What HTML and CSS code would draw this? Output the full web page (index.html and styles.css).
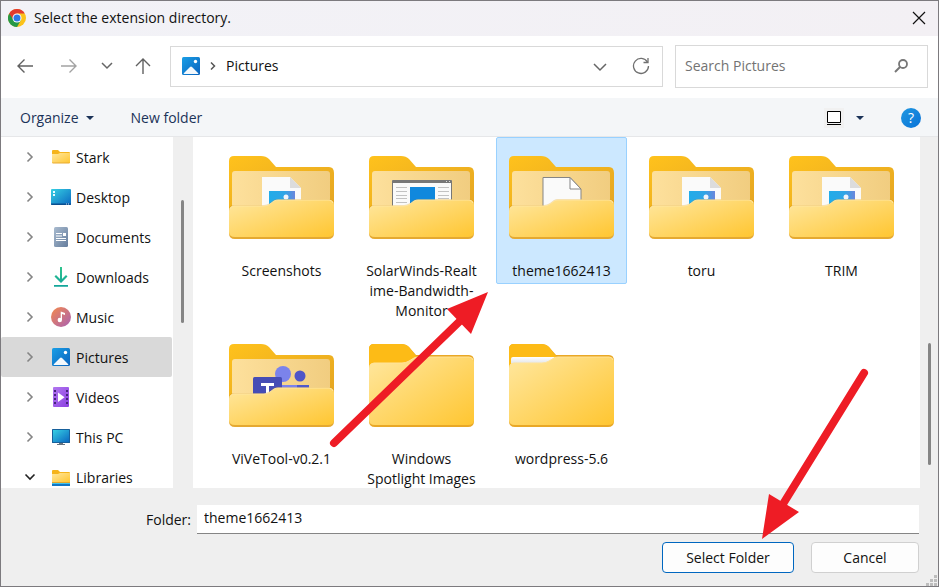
FILE: index.html
```html
<!DOCTYPE html>
<html lang="en">
<head>
<meta charset="utf-8">
<title>Select the extension directory.</title>
<link rel="stylesheet" href="styles.css">
</head>
<body>
<svg class="defs" aria-hidden="true">
  <defs>
    <linearGradient id="gBack" x1="0" y1="0" x2="1" y2="1"><stop offset="0" stop-color="#ffc21c"/><stop offset="1" stop-color="#e3a423"/></linearGradient>
    <linearGradient id="gInner" x1="0" y1="0" x2="1" y2="0"><stop offset="0" stop-color="#fde09c"/><stop offset="1" stop-color="#f1cd80"/></linearGradient>
    <linearGradient id="gFront" x1="0" y1="0" x2="1" y2="1"><stop offset="0" stop-color="#ffe79f"/><stop offset="1" stop-color="#ffc631"/></linearGradient>
    <linearGradient id="gBlue" x1="0" y1="0" x2="1" y2="1"><stop offset="0" stop-color="#1a9fe6"/><stop offset="1" stop-color="#0a62bd"/></linearGradient>
    <linearGradient id="gDesk" x1="0" y1="0" x2="1" y2="1"><stop offset="0" stop-color="#36d0e3"/><stop offset="1" stop-color="#0b68c1"/></linearGradient>
    <linearGradient id="gDoc" x1="0" y1="0" x2="1" y2="1"><stop offset="0" stop-color="#a9bbcf"/><stop offset="1" stop-color="#657d9d"/></linearGradient>
    <linearGradient id="gDown" x1="0" y1="0" x2="0" y2="1"><stop offset="0" stop-color="#2fc48d"/><stop offset="1" stop-color="#12a59b"/></linearGradient>
    <linearGradient id="gMusic" x1="0" y1="0" x2="1" y2="1"><stop offset="0" stop-color="#f58a4c"/><stop offset="1" stop-color="#a860b4"/></linearGradient>
    <linearGradient id="gVideo" x1="0" y1="0" x2="1" y2="1"><stop offset="0" stop-color="#b277f0"/><stop offset="1" stop-color="#8a3fe0"/></linearGradient>
    <linearGradient id="gPic" x1="0" y1="0" x2="1" y2="0"><stop offset="0" stop-color="#22ace8"/><stop offset="0.6" stop-color="#30a5e6"/><stop offset="1" stop-color="#6a86dc"/></linearGradient>
    <linearGradient id="gSheet" x1="0" y1="0" x2="0" y2="1"><stop offset="0" stop-color="#ffffff"/><stop offset="1" stop-color="#d7dade"/></linearGradient>

    <symbol id="back" viewBox="0 0 105 84">
      <path d="M0 54V5Q0 0 5 0H32Q37 0 40 3L47 11H100Q105 11 105 17V54Z" fill="url(#gBack)"/>
      <path d="M3 56V18Q3 15 6 15H98Q101 15 101 18V56Z" fill="url(#gInner)"/>
    </symbol>
    <symbol id="front" viewBox="0 0 105 84">
      <path d="M0 53Q0 49 5 49H35Q38 49 41 47L45 44Q47 43 49 43H100Q105 43 105 49V56H0Z" fill="#c78a1c" opacity="0.25"/>
      <path d="M0 56Q0 51 5 51H35Q38 51 41 49L45 46Q47 45 49 45H100Q105 45 105 50V77Q105 83 99 83H6Q0 83 0 77Z" fill="#e5a931"/>
      <path d="M0 55Q0 50 5 50H35Q38 50 41 48L45 45Q47 44 49 44H100Q105 44 105 49V76Q105 81 99 81H6Q0 81 0 76Z" fill="url(#gFront)"/>
      <path d="M1 53Q2 50 5 50H35Q38 50 41 48L45 45Q47 44 49 44H100Q103 44 104 47" fill="none" stroke="#ffe5a0" stroke-width="1"/>
    </symbol>
    <symbol id="closed" viewBox="0 0 105 84">
      <path d="M0 24V5Q0 0 5 0H32Q37 0 40 3L47 11H100Q105 11 105 17V77Q105 83 99 83H6Q0 83 0 77Z" fill="#e9a826"/>
      <path d="M0 24V5Q0 0 5 0H32Q37 0 40 3L47 12V24Z" fill="#fdbb16"/>
    </symbol>
    <symbol id="closedFront" viewBox="0 0 105 84">
      <path d="M0 24Q0 19 5 19H33Q37 19 40 17L45 14Q47 13 49 13H100Q105 13 105 18V76Q105 81 99 81H6Q0 81 0 76Z" fill="url(#gFront)"/>
      <path d="M1 22Q2 19 5 19H33Q37 19 40 17L45 14Q47 13 49 13H100Q103 13 104 16" fill="none" stroke="#ffe39a"/>
    </symbol>
    <symbol id="imageFolder" viewBox="0 0 105 84">
      <use href="#back"/>
      <path d="M33 56V21H61L72 32V56Z" fill="#fafafa"/>
      <path d="M61 21V32H72Z" fill="#dcdcdc"/>
      <rect x="40" y="35" width="26" height="20" fill="url(#gPic)"/>
      <circle cx="57" cy="41" r="2.5" fill="#f2f4fb"/>
      <use href="#front"/>
    </symbol>
    <symbol id="picture" viewBox="0 0 18 18">
      <rect width="18" height="18" rx="1.500" fill="url(#gBlue)"/>
      <path d="M1.500 16.500L8 10Q9 9 10 10L16.500 16.500Q16 17 15 17H3Q2 17 1.500 16.500Z" fill="#f3f8fc"/>
      <circle cx="13.500" cy="4.500" r="1.700" fill="#fff"/>
    </symbol>
    <symbol id="chev" viewBox="0 0 8 12"><path d="M1.500 1.500L6 6L1.500 10.500" fill="none" stroke="#858585" stroke-width="1.600"/></symbol>
    <symbol id="smallFolder" viewBox="0 0 20 20">
      <path d="M1 16V4Q1 3 2 3H7L9 5H18Q19 5 19 6V16Z" fill="#f5b41c"/>
      <path d="M1 7H7L9 6H19V15Q19 16 18 16H2Q1 16 1 15Z" fill="url(#gFront)"/>
      <path d="M1.500 16H18.500" stroke="#e7aa33"/>
    </symbol>
  </defs>
</svg>

<div class="dialog">
  <header class="titlebar">
    <svg class="i18" viewBox="0 0 18 18" aria-hidden="true">
      <circle cx="9" cy="9" r="9" fill="#fbc21a"/>
      <path d="M9 9L1.200 4.500A9 9 0 0 0 9 18L13 11Z" fill="#279847"/>
      <path d="M1.200 4.500A9 9 0 0 1 16.800 4.500H9L5.500 11Z" fill="#e33b2e"/>
      <circle cx="9" cy="9" r="4.500" fill="#fff"/><circle cx="9" cy="9" r="3.500" fill="#2f79e6"/>
    </svg>
    <h1>Select the extension directory.</h1>
    <button class="bare" aria-label="Close"><svg class="i14" viewBox="0 0 14 14"><path d="M1 1L13 13M13 1L1 13" fill="none" stroke="#111" stroke-width="1.200"/></svg></button>
  </header>

  <div class="navbar">
    <div class="history">
      <button class="bare" aria-label="Back"><svg class="i18" viewBox="0 0 18 18"><path d="M17 9H2M8.500 2.500L2 9L8.500 15.500" fill="none" stroke="#616161" stroke-width="1.400"/></svg></button>
      <button class="bare forward" aria-label="Forward"><svg class="i18" viewBox="0 0 18 18"><path d="M1 9H16M9.500 2.500L16 9L9.500 15.500" fill="none" stroke="#a2a2a2" stroke-width="1.400"/></svg></button>
      <button class="bare recent" aria-label="Recent locations"><svg class="i14" viewBox="0 0 14 14"><path d="M2 4L7 9L12 4" fill="none" stroke="#666" stroke-width="1.500"/></svg></button>
      <button class="bare" aria-label="Up"><svg class="i18" viewBox="0 0 18 18"><path d="M9 17V2M2 9L9 2L16 9" fill="none" stroke="#616161" stroke-width="1.400"/></svg></button>
    </div>
    <div class="address">
      <svg class="i18" aria-hidden="true"><use href="#picture"/></svg>
      <svg class="crumb" viewBox="0 0 6 8" aria-hidden="true"><path d="M1 0.500L4.500 4L1 7.500" fill="none" stroke="#555" stroke-width="1.500"/></svg>
      <a href="#">Pictures</a>
      <button class="bare drop" aria-label="Previous locations"><svg class="i14" viewBox="0 0 14 14"><path d="M1 5L7 11L13 5" fill="none" stroke="#666" stroke-width="1.500"/></svg></button>
      <button class="bare" aria-label="Refresh"><svg class="i18" viewBox="0 0 18 18"><path d="M15.500 5.200A7.500 7.500 0 1 0 16.500 9" fill="none" stroke="#707070" stroke-width="1.300"/><path d="M16 1V5.500H11.500" fill="none" stroke="#707070" stroke-width="1.300"/></svg></button>
    </div>
    <label class="search">
      <input type="text" placeholder="Search Pictures" aria-label="Search Pictures">
      <svg class="i14" viewBox="0 0 14 14" aria-hidden="true"><circle cx="9" cy="5" r="4" fill="none" stroke="#777" stroke-width="1.800"/><path d="M6 8L1 13" stroke="#777" stroke-width="2"/></svg>
    </label>
  </div>

  <div class="toolbar">
    <button class="bare">Organize <svg class="caret" viewBox="0 0 8 4" aria-hidden="true"><path d="M0 0H8L4 4Z" fill="#1b3358"/></svg></button>
    <button class="bare">New folder</button>
    <div class="tools">
      <button class="bare view" aria-label="Change your view"><svg class="i14" viewBox="0 0 14 14"><path d="M0.500 0.500H13.500V11.500H0.500Z" fill="#fff" stroke="#000"/><path d="M0 13.500H14" stroke="#000"/></svg></button>
      <button class="bare" aria-label="More view options"><svg class="caret" viewBox="0 0 8 4"><path d="M0 0H8L4 4Z" fill="#1b3358"/></svg></button>
      <button class="help" aria-label="Help">?</button>
    </div>
  </div>

  <main class="middle">
    <nav class="sidebar" aria-label="Folders">
      <ul>
        <li><svg class="chev" aria-hidden="true"><use href="#chev"/></svg><svg class="i20" aria-hidden="true"><use href="#smallFolder"/></svg><a href="#">Stark</a></li>
        <li><svg class="chev" aria-hidden="true"><use href="#chev"/></svg><svg class="i20" viewBox="0 0 20 20" aria-hidden="true"><rect y="2" width="20" height="16" rx="1" fill="url(#gDesk)"/><path d="M0 16.500H20V17Q20 18 19 18H1Q0 18 0 17Z" fill="#0a4e8f"/><path d="M2 4H4V6H2ZM2 7H4V9H2Z" fill="#e8fbff"/><path d="M15 17H16M17 17H18" stroke="#cde"/></svg><a href="#">Desktop</a></li>
        <li><svg class="chev" aria-hidden="true"><use href="#chev"/></svg><svg class="i20" viewBox="0 0 20 20" aria-hidden="true"><rect x="3" width="14" height="20" rx="1.500" fill="url(#gDoc)"/><path d="M5 6.500H11M5 9H11M5 11.500H15M5 13.500H15" stroke="#fff" stroke-width="1.200"/><rect x="12" y="6" width="3" height="3" fill="#fff"/></svg><a href="#">Documents</a></li>
        <li><svg class="chev" aria-hidden="true"><use href="#chev"/></svg><svg class="i20" viewBox="0 0 20 20" aria-hidden="true"><path d="M9 0H11V12L15 8L16.500 9.500L10 16L3.500 9.500L5 8L9 12ZM3 18H17V19.800H3Z" fill="url(#gDown)"/></svg><a href="#">Downloads</a></li>
        <li><svg class="chev" aria-hidden="true"><use href="#chev"/></svg><svg class="i20" viewBox="0 0 20 20" aria-hidden="true"><circle cx="10" cy="10" r="10" fill="url(#gMusic)"/><circle cx="8.800" cy="13" r="2.200" fill="#fff"/><path d="M9.700 13V4.500L14 6V8L11 7V13Z" fill="#fff"/></svg><a href="#">Music</a></li>
        <li class="current"><svg class="chev" aria-hidden="true"><use href="#chev"/></svg><svg class="i20" viewBox="-1 -1 20 20" aria-hidden="true"><use href="#picture" width="18" height="18"/></svg><a href="#" aria-current="page">Pictures</a></li>
        <li><svg class="chev" aria-hidden="true"><use href="#chev"/></svg><svg class="i20" viewBox="0 0 20 20" aria-hidden="true"><rect x="2" width="16" height="20" rx="1" fill="url(#gVideo)"/><path d="M4 3V18M16 3V18" stroke="#46237c" stroke-width="2" stroke-dasharray="2 2"/><path d="M7 5.500V15L13.500 10.200Z" fill="#fff"/></svg><a href="#">Videos</a></li>
        <li><svg class="chev" aria-hidden="true"><use href="#chev"/></svg><svg class="i20" viewBox="0 0 20 20" aria-hidden="true"><rect x="1" y="2" width="18" height="14" rx="0.500" fill="#17609b"/><rect x="2" y="3" width="16" height="12" fill="url(#gDesk)"/><path d="M8 16H12V17H14V18H6V17H8Z" fill="#68737e"/></svg><a href="#">This PC</a></li>
        <li><svg class="chev open" viewBox="0 0 12 8" aria-hidden="true"><path d="M1.500 1.500L6 6L10.500 1.500" fill="none" stroke="#222" stroke-width="1.600"/></svg><svg class="i20" viewBox="0 0 20 20" aria-hidden="true"><path d="M1 15V4Q1 3 2 3H7L9 5H18Q19 5 19 6V15Z" fill="#f5b41c"/><path d="M1 7H7L9 6H19V15H1Z" fill="url(#gFront)"/><path d="M1 15.500H19" stroke="#e2a72c"/><path d="M1 16.500H19" stroke="#3fc3ee"/><path d="M1 18H19" stroke="#1276c4" stroke-width="2"/></svg><a href="#">Libraries</a></li>
      </ul>
    </nav>
    <div class="track side"><div class="thumb"></div></div>
    <ul class="files">
      <li><button class="file"><svg class="folder" viewBox="0 0 105 84" aria-hidden="true"><use href="#imageFolder"/></svg><span>Screenshots</span></button></li>
      <li><button class="file"><svg class="folder" viewBox="0 0 105 84" aria-hidden="true"><use href="#back"/><rect x="23" y="24" width="60" height="32" rx="1" fill="#777"/><rect x="24" y="27" width="58" height="30" fill="#fafafa"/><path d="M77 25.500H78M80 25.500H81" stroke="#ddd"/><rect x="41" y="31" width="25" height="20" fill="#1088dd"/><path d="M27 31.500H38M27 35.500H38M27 39.500H38M27 42.500H38M27 46.500H38M69 31.500H80M69 35.500H80M69 39.500H80M69 42.500H80M69 46.500H80" stroke="#c2c2c2"/><use href="#front"/></svg><span>SolarWinds-Realt<wbr>ime-Bandwidth-<wbr>Monitor</span></button></li>
      <li><button class="file selected" aria-pressed="true"><svg class="folder" viewBox="0 0 105 84" aria-hidden="true"><use href="#back"/><path d="M34 56V21.500H61L72 33V56Z" fill="#fafafa" stroke="#858585"/><path d="M61 21.500V33H72Z" fill="#fff" stroke="#858585"/><use href="#front"/></svg><span>theme1662413</span></button></li>
      <li><button class="file"><svg class="folder" viewBox="0 0 105 84" aria-hidden="true"><use href="#imageFolder"/></svg><span>toru</span></button></li>
      <li><button class="file"><svg class="folder" viewBox="0 0 105 84" aria-hidden="true"><use href="#imageFolder"/></svg><span>TRIM</span></button></li>
      <li><button class="file"><svg class="folder" viewBox="0 0 105 84" aria-hidden="true"><use href="#back"/><circle cx="71" cy="32" r="5.500" fill="#4f55c8"/><path d="M50 41H80V56H50Z" fill="#5059c9"/><path d="M50 41H68V56H50Z" fill="#7b83eb"/><circle cx="54" cy="30" r="8" fill="#7b83eb"/><rect x="24" y="33" width="29" height="24" rx="1.500" fill="#464db5"/><path d="M32 39H45V42H40V54H37V42H32Z" fill="#fff"/><use href="#front"/></svg><span>ViVeTool-v0.2.1</span></button></li>
      <li><button class="file"><svg class="folder" viewBox="0 0 105 84" aria-hidden="true"><use href="#closed"/><use href="#closedFront"/></svg><span>Windows<br>Spotlight Images</span></button></li>
      <li><button class="file"><svg class="folder" viewBox="0 0 105 84" aria-hidden="true"><use href="#closed"/><path d="M2 22V15Q2 13 4 13H46L38 20Z" fill="url(#gSheet)"/><use href="#closedFront"/></svg><span>wordpress-5.6</span></button></li>
    </ul>
    <div class="track main"><div class="thumb"></div></div>
  </main>

  <footer class="footer">
    <div class="field">
      <label for="folder">Folder:</label>
      <input id="folder" type="text" value="theme1662413">
    </div>
    <div class="actions">
      <button class="push primary">Select Folder</button>
      <button class="push">Cancel</button>
    </div>
    <svg class="grip" viewBox="0 0 12 12" aria-hidden="true"><path d="M9 1H12V4H9ZM5 5H8V8H5ZM9 5H12V8H9ZM1 9H4V12H1ZM5 9H8V12H5ZM9 9H12V12H9Z" fill="#bdbdbd"/></svg>
  </footer>

  <svg class="arrows" aria-hidden="true">
    <g fill="#ee1c25" stroke="#ee1c25">
      <path d="M334 443L461 320M864 373L783 504" stroke-width="8" stroke-linecap="round"/>
      <path d="M488 292L447 309L471 334ZM762 539L769 494L799 512Z" stroke="none"/>
    </g>
  </svg>
</div>
</body>
</html>
```

FILE: styles.css
```css
* {
  box-sizing: border-box;
}

body {
  margin: 0;
  font: 14px/20px "Open Sans", "Noto Sans", sans-serif;
  color: #111;
}

button,
input {
  font: inherit;
  color: inherit;
}

a {
  color: inherit;
  text-decoration: none;
}

ul {
  list-style: none;
  margin: 0;
  padding: 0;
}

svg {
  display: block;
  flex: none;
}

.defs {
  position: absolute;
  width: 0;
  height: 0;
}

.i14 { width: 14px; height: 14px; }
.i18 { width: 18px; height: 18px; }
.i20 { width: 20px; height: 20px; }

.bare {
  display: flex;
  align-items: center;
  border: 0;
  padding: 0;
  background: none;
}

.dialog {
  position: relative;
  display: flex;
  flex-direction: column;
  height: 100vh;
  overflow: hidden;
  border: 1px solid #7c7a7e;
  background: #efefef;
}

.titlebar {
  display: flex;
  align-items: center;
  gap: 8px;
  height: 35px;
  padding: 0 12px 2px 7px;
  background: linear-gradient(90deg, #f2f2f7, #f3f0f4);
}

.titlebar h1 {
  flex: 1;
  margin: 0;
  font-size: 14px;
  font-weight: 400;
}

.navbar {
  display: flex;
  align-items: center;
  height: 62px;
  padding: 0 10px 2px 15px;
  background: #fff;
}

.history {
  display: flex;
  align-items: center;
  width: 154px;
}

.forward { margin: 0 22px 0 26px; }
.recent { margin-right: 20px; }

.address {
  display: flex;
  flex: 1;
  align-items: center;
  min-width: 0;
  height: 41px;
  margin-right: 12px;
  padding: 0 12px 0 11px;
  border: 1px solid #d9d9d9;
}

.crumb {
  width: 6px;
  height: 8px;
  margin: 0 10px;
}

.drop { margin: 0 25px 0 auto; }

.search {
  display: flex;
  align-items: center;
  width: 253px;
  height: 43px;
  padding: 0 19px 0 9px;
  border: 1px solid #d9d9d9;
}

.search input {
  flex: 1;
  min-width: 0;
  border: 0;
  padding: 0;
  outline: 0;
  background: none;
}

.search input::placeholder {
  color: #737373;
  opacity: 1;
}

.toolbar {
  display: flex;
  align-items: center;
  gap: 37px;
  height: 39px;
  padding: 1px 17px 0 19px;
  border-bottom: 1px solid #e6e7e9;
  background: #f4f6f8;
  color: #1b3358;
}

.caret {
  width: 8px;
  height: 4px;
}

.toolbar .bare { gap: 7px; }

.tools {
  display: flex;
  align-items: center;
  gap: 12px;
  margin-left: auto;
}

.tools .view {
  padding: 3px;
  background: #f1f1f1;
}

.help {
  width: 20px;
  height: 20px;
  margin-left: 25px;
  padding: 0;
  border: 0;
  border-radius: 50%;
  background: linear-gradient(135deg, #1f98e0, #0a72d8);
  color: #fff;
}

.middle {
  display: flex;
  flex: 1;
  min-height: 0;
}

.sidebar {
  width: 172px;
  overflow: hidden;
  background: #fff;
}

.sidebar li {
  display: flex;
  align-items: center;
  height: 40px;
  margin-right: 1px;
  padding-left: 25px;
  border-radius: 2px;
}

.sidebar .current { background: #d9d9d9; }

.chev {
  width: 8px;
  height: 12px;
  margin-right: 17px;
}

.chev.open {
  width: 12px;
  height: 8px;
  margin: 0 15px 0 -2px;
}

.sidebar a {
  margin-left: 5px;
  padding-top: 2px;
}

.track { background: #efefef; }

.thumb {
  width: 3px;
  border-radius: 2px;
  background: #858585;
}

.side {
  width: 20px;
  padding: 63px 0 0 8px;
}

.side .thumb { height: 123px; }

.main {
  width: 18px;
  padding: 206px 0 0 8px;
}

.main .thumb { height: 122px; }

.files {
  display: grid;
  flex: 1;
  grid-template-columns: repeat(auto-fill, 131px);
  gap: 1px 9px;
  align-content: start;
  min-width: 0;
  padding-left: 23px;
  overflow: hidden;
  background: #fff;
}

.file {
  display: flex;
  flex-direction: column;
  align-items: center;
  gap: 21px;
  width: 100%;
  padding: 18px 0 2px;
  border: 1px solid transparent;
  border-radius: 2px;
  background: none;
  text-align: center;
}

.file.selected {
  border-color: #99d1ff;
  background: #cce8ff;
}

.folder {
  width: 105px;
  height: 84px;
}

.footer {
  position: relative;
  height: 98px;
  padding: 17px 19px 0 0;
}

.field {
  display: flex;
  align-items: center;
  gap: 6px;
}

.field label {
  width: 190px;
  text-align: right;
}

.field input {
  flex: 1;
  min-width: 0;
  height: 29px;
  padding: 0 7px 3px;
  border: 0;
  border-bottom: 1px solid #858585;
  outline: 0;
  background: #fff;
}

.actions {
  display: flex;
  justify-content: flex-end;
  gap: 17px;
  margin-top: 8px;
}

.push {
  width: 108px;
  height: 31px;
  padding: 0;
  border: 1px solid #d0d0d0;
  border-radius: 4px;
  background: #fdfdfd;
}

.push.primary {
  width: 132px;
  border-color: #0067c0;
}

.grip {
  position: absolute;
  right: 1px;
  bottom: 0;
  width: 12px;
  height: 12px;
}

.arrows {
  position: absolute;
  top: -1px;
  left: -1px;
  width: 939px;
  height: 587px;
  pointer-events: none;
}
```
